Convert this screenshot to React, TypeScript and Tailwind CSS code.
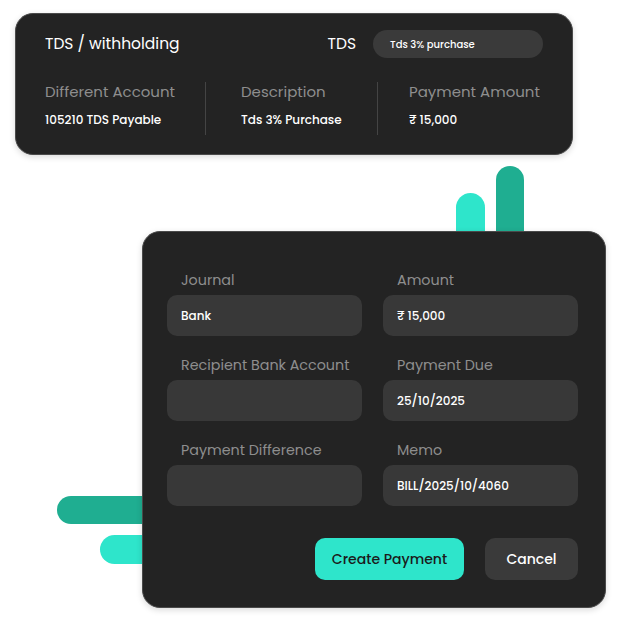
import * as React from 'react';

const font = { fontFamily: '"Poppins", Inter, "Noto Sans", sans-serif' };

const Field: React.FC<{ label: string; value?: string }> = ({ label, value }) => (
  <div className="flex flex-col">
    <span className="pl-[14px] text-[14.3px] leading-[20px] text-[#8e8e8e]">{label}</span>
    <div className="mt-[5px] flex h-[41px] items-center rounded-[10px] bg-[#383838] px-[14px] text-[12px] font-medium text-white">
      {value}
    </div>
  </div>
);

export default function App() {
  return (
    <div className="relative h-[625px] w-[625px] overflow-hidden bg-white" style={font}>
      {/* decorative bars behind the form card */}
      <div className="absolute left-[456px] top-[193px] h-[80px] w-[29px] rounded-full bg-[#2ee5cb]" />
      <div className="absolute left-[496px] top-[166px] h-[100px] w-[28px] rounded-full bg-[#1fae91]" />
      <div className="absolute left-[57px] top-[496px] h-[28px] w-[120px] rounded-full bg-[#1fae91]" />
      <div className="absolute left-[100px] top-[535px] h-[29px] w-[100px] rounded-full bg-[#2ee5cb]" />

      <div className="relative z-10 ml-[15px] mt-[13px] h-[142px] w-[558px] rounded-[18px] border border-[#4a4a4a] bg-[#232323] px-[29px] pt-[16px] shadow-[0_2px_6px_rgba(0,0,0,0.15)]">
        <div className="flex h-[28px] items-center justify-between">
          <span className="text-[15.5px] text-white">TDS / withholding</span>
          <div className="flex items-center gap-[17px]">
            <span className="text-[15.5px] text-white">TDS</span>
            <div className="flex h-[28px] w-[170px] items-center rounded-full bg-[#3a3a3a] px-[17px] text-[10px] font-medium text-white">
              Tds 3% purchase
            </div>
          </div>
        </div>
        <div className="mt-[24px] flex h-[53px]">
          <div className="w-[160px]">
            <div className="text-[15px] leading-[20px] text-[#8e8e8e]">Different Account</div>
            <div className="mt-[10px] text-[12px] font-medium leading-[16px] text-white">105210 TDS Payable</div>
          </div>
          <div className="w-px bg-[#444]" />
          <div className="w-[171px] pl-[35px]">
            <div className="text-[15px] leading-[20px] text-[#8e8e8e]">Description</div>
            <div className="mt-[10px] text-[12px] font-medium leading-[16px] text-white">Tds 3% Purchase</div>
          </div>
          <div className="w-px bg-[#444]" />
          <div className="pl-[31px]">
            <div className="text-[15px] leading-[20px] text-[#8e8e8e]">Payment Amount</div>
            <div className="mt-[10px] text-[12px] font-medium leading-[16px] text-white">₹ 15,000</div>
          </div>
        </div>
      </div>

      <div className="relative z-10 ml-[142px] mt-[76px] h-[377px] w-[464px] rounded-[18px] border border-[#4a4a4a] bg-[#232323] pl-[24px] pr-[27px] pt-[38px] shadow-[0_2px_6px_rgba(0,0,0,0.15)]">
        <div className="grid grid-cols-[195px_195px] gap-x-[21px] gap-y-[19px]">
          <Field label="Journal" value="Bank" />
          <Field label="Amount" value="₹ 15,000" />
          <Field label="Recipient Bank Account" />
          <Field label="Payment Due" value="25/10/2025" />
          <Field label="Payment Difference" />
          <Field label="Memo" value="BILL/2025/10/4060" />
        </div>
        <div className="mt-[32px] flex justify-end gap-[21px]">
          <button className="h-[42px] w-[149px] rounded-[10px] bg-[#2ee5cb] text-[14px] font-medium text-[#1b1b1b]">
            Create Payment
          </button>
          <button className="h-[42px] w-[93px] rounded-[10px] bg-[#3a3a3a] text-[14px] font-medium text-white">
            Cancel
          </button>
        </div>
      </div>
    </div>
  );
}
